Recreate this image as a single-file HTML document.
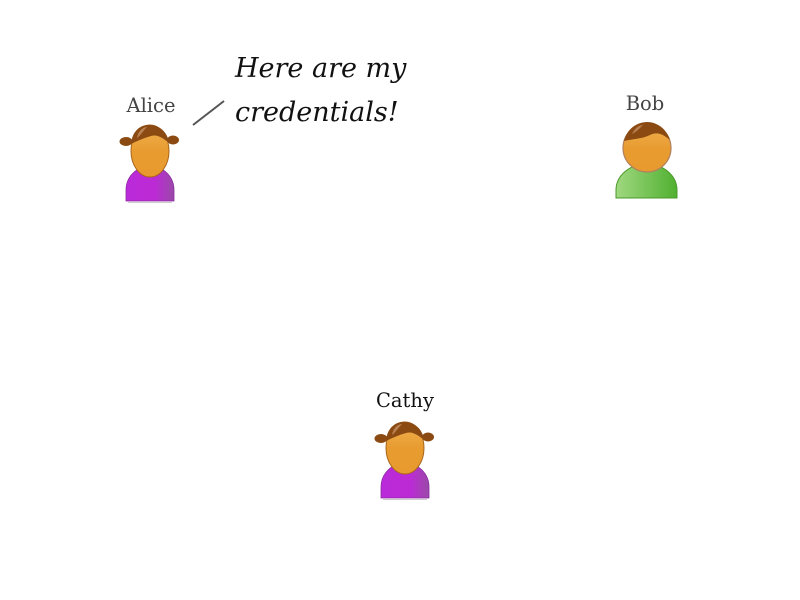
<!DOCTYPE html>
<html><head><meta charset="utf-8"><style>
html,body{margin:0;padding:0;background:#fff;width:800px;height:600px;overflow:hidden}
</style></head><body>
<svg width="800" height="600" viewBox="0 0 800 600" xmlns="http://www.w3.org/2000/svg">
<defs>
<linearGradient id="face" x1="0" y1="0" x2="0" y2="1"><stop offset="0" stop-color="#f0b050"/><stop offset="0.5" stop-color="#e89c30"/><stop offset="1" stop-color="#e89a2e"/></linearGradient>
<linearGradient id="pur" x1="0" y1="0" x2="1" y2="0"><stop offset="0" stop-color="#bb2ad8"/><stop offset="0.6" stop-color="#bc2ad6"/><stop offset="1" stop-color="#9a4aa8"/></linearGradient>
<linearGradient id="grn" x1="0" y1="0" x2="1" y2="0"><stop offset="0" stop-color="#a0d880"/><stop offset="1" stop-color="#50b030"/></linearGradient>
<g id="girl">
<path d="M126 201 L126 190 A24 24 0 0 1 174 190 L174 201 Z" fill="url(#pur)" stroke="#8a2aa0" stroke-width="0.8"/>
<line x1="128" y1="202.5" x2="172" y2="202.5" stroke="#ccc" stroke-width="1"/>
<ellipse cx="126" cy="141.5" rx="6.5" ry="4.5" fill="#8a4a12"/>
<ellipse cx="173" cy="140" rx="6" ry="4.5" fill="#8a4a12"/>
<ellipse cx="150" cy="151" rx="19" ry="26" fill="url(#face)" stroke="#a8651a" stroke-width="1"/>
<path d="M131 144 C132 130 142 124 150 125 C160 125 168 133 169 143 C164 139 158 134 151 136 C144 138 137 141 131 144 Z" fill="#8a4a12"/>
<path d="M137 138 C138 131 143 127 147 127 C143 131 141 135 137 138 Z" fill="#b98050"/>
</g>
</defs>
<text x="151" y="112" font-family="DejaVu Serif, serif" font-size="19.5" fill="#444" text-anchor="middle">Alice</text>
<use href="#girl"/>
<line x1="193" y1="125" x2="224" y2="101" stroke="#555" stroke-width="2"/>
<text font-family="DejaVu Serif, serif" font-style="italic" font-size="27" fill="#111"><tspan x="235" y="77">Here are my</tspan><tspan x="235" y="121">credentials!</tspan></text>
<text x="645" y="110" font-family="DejaVu Serif, serif" font-size="19.5" fill="#444" text-anchor="middle">Bob</text>
<path d="M616 198 L616 190 A30.5 26 0 0 1 677 190 L677 198 Z" fill="url(#grn)" stroke="#4a9a2a" stroke-width="1"/>
<circle cx="647" cy="148" r="24" fill="url(#face)" stroke="#b08060" stroke-width="1.2"/>
<path d="M624 141 C627 128 638 122 647 122 C658 122 667 130 670 140 C664 135 658 131 650 135 C642 139 632 139 624 141 Z" fill="#8a4a12"/>
<path d="M632 134 C635 128 639 125 643 125 C639 129 636 132 632 134 Z" fill="#b98050"/>
<text x="405" y="407" font-family="DejaVu Serif, serif" font-size="19.5" fill="#111" text-anchor="middle">Cathy</text>
<use href="#girl" transform="translate(255,297)"/>
</svg>
</body></html>
